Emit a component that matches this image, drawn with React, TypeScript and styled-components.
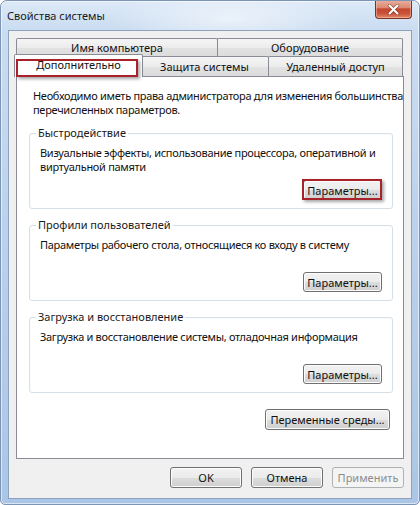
import React from "react";
import styled, { createGlobalStyle } from "styled-components";

const Global = createGlobalStyle`
  html, body { margin: 0; padding: 0; background: #ffffff; }
  body {
    font-family: "Noto Sans", "Open Sans", sans-serif;
    font-size: 11px;
    color: #000;
  }
  * { box-sizing: border-box; }
`;

const Window = styled.div`
  width: 420px;
  height: 505px;
  border: 1px solid #7d95b4;
  border-radius: 7px 7px 5px 5px;
  background:
    radial-gradient(ellipse 120px 30px at 230px 18px, rgba(255,255,255,0.55), rgba(255,255,255,0) 100%),
    linear-gradient(180deg, #dce9f7 0px, #cadcf1 30px, #bcd2ec 220px, #abc5e6 505px);
  display: flex;
  flex-direction: column;
  overflow: hidden;
  box-shadow: inset 0 0 0 1px rgba(255, 255, 255, 0.55);
`;

const TitleBar = styled.div`
  height: 29px;
  flex: none;
  display: flex;
  align-items: flex-start;
  justify-content: space-between;
`;

const Title = styled.div`
  padding-left: 6px;
  line-height: 29px;
  font-size: 11px;
  color: #1b1b1b;
`;

const CloseButton = styled.div`
  width: 37px;
  height: 19px;
  margin: -1px 7px 0 0;
  border: 1px solid #7a3323;
  border-top: none;
  border-radius: 0 0 4px 4px;
  background: linear-gradient(180deg, #eab1a2 0%, #dc8a74 42%, #c4472f 50%, #c9533a 75%, #e0896a 100%);
  box-shadow: inset 0 0 0 1px rgba(255, 210, 195, 0.45);
  display: flex;
  align-items: center;
  justify-content: center;
`;

const Client = styled.div`
  flex: 1;
  margin: 0 7px 5px;
  border: 1px solid #8da2bd;
  background: #f0f0f0;
  padding: 7px 7px 10px;
  display: flex;
  flex-direction: column;
`;

const TabStrip = styled.div`
  display: flex;
  flex-direction: column;
  position: relative;
  z-index: 2;
`;

const TabRow = styled.div<{ $h: number }>`
  display: flex;
  height: ${(p) => p.$h}px;
`;

const Tab = styled.div<{ $w: number; $selected?: boolean; $first?: boolean }>`
  position: relative;
  flex: none;
  width: ${(p) => p.$w}px;
  height: ${(p) => (p.$selected ? "23px" : "100%")};
  margin-top: ${(p) => (p.$selected ? "-2px" : "0")};
  margin-left: ${(p) => (p.$selected ? "-2px" : p.$first ? "0" : "-1px")};
  margin-right: ${(p) => (p.$selected ? "-2px" : "0")};
  z-index: ${(p) => (p.$selected ? 3 : 1)};
  border: 1px solid #898c95;
  border-bottom: none;
  border-radius: 2px 2px 0 0;
  background: ${(p) =>
    p.$selected
      ? "#ffffff"
      : "linear-gradient(180deg, #f5f5f5 0%, #ececec 50%, #e2e2e2 51%, #dcdcdc 100%)"};
  display: flex;
  align-items: center;
  justify-content: center;
  padding-bottom: ${(p) => (p.$selected ? "3px" : "0")};
  color: #111;
  white-space: nowrap;
`;

const Highlight = styled.span<{ $inset: string }>`
  position: absolute;
  inset: ${(p) => p.$inset};
  border: 2px solid #a82229;
  box-shadow: 2px 2px 3px rgba(0, 0, 0, 0.35);
  pointer-events: none;
`;

const Panel = styled.div`
  flex: 1;
  position: relative;
  z-index: 1;
  border: 1px solid #898c95;
  background: #ffffff;
  padding: 12px 10px 0 12px;
  display: flex;
  flex-direction: column;
`;

const Intro = styled.div`
  margin: 0 0 9px 4px;
  line-height: 14px;
  color: #111;
  white-space: nowrap;
  letter-spacing: -0.3px;
`;

const Group = styled.fieldset`
  margin: 0 0 9px;
  min-width: 0;
  border: 1px solid #d5dfe5;
  border-radius: 3px;
  padding: 0 10px 8px 10px;
  display: flex;
  flex-direction: column;
  box-shadow: inset 1px 1px 0 #fafcfd;
`;

const Legend = styled.legend`
  padding: 0 2px;
  margin-left: -4px;
  line-height: 14px;
  color: #1a1a1a;
`;

const Desc = styled.div`
  margin-top: 6px;
  line-height: 14px;
  min-height: 28px;
  color: #111;
  white-space: nowrap;
  letter-spacing: -0.3px;
`;

const ButtonRow = styled.div<{ $mt: number; $pr?: number }>`
  display: flex;
  justify-content: flex-end;
  margin-top: ${(p) => p.$mt}px;
  padding-right: ${(p) => p.$pr ?? 0}px;
  gap: 9px;
`;

const Button = styled.div<{ $w: number; $h?: number; $disabled?: boolean }>`
  position: relative;
  width: ${(p) => p.$w}px;
  height: ${(p) => p.$h ?? 20}px;
  border: 1px solid ${(p) => (p.$disabled ? "#adb2b5" : "#707070")};
  border-radius: 3px;
  background: ${(p) =>
    p.$disabled
      ? "#f4f4f4"
      : "linear-gradient(180deg, #f2f2f2 0%, #ebebeb 50%, #dddddd 51%, #cfcfcf 100%)"};
  box-shadow: inset 0 0 0 1px ${(p) => (p.$disabled ? "#f4f4f4" : "#fcfcfc")};
  display: flex;
  align-items: center;
  justify-content: center;
  color: ${(p) => (p.$disabled ? "#8d8d8d" : "#111")};
  white-space: nowrap;
`;

const BottomRow = styled.div`
  display: flex;
  justify-content: flex-end;
  gap: 9px;
  margin-top: 8px;
`;

const CloseIcon = () => (
  <svg width="13" height="11" viewBox="0 0 13 11">
    <path d="M2.5 1.5 L10.5 9.5 M10.5 1.5 L2.5 9.5" stroke="#6b2a1e" strokeWidth="3.6" strokeLinecap="round" opacity="0.55" />
    <path d="M2.5 1.5 L10.5 9.5 M10.5 1.5 L2.5 9.5" stroke="#ffffff" strokeWidth="2" strokeLinecap="round" />
  </svg>
);

export default function App() {
  return (
    <>
      <Global />
      <Window>
        <TitleBar>
          <Title>Свойства системы</Title>
          <CloseButton>
            <CloseIcon />
          </CloseButton>
        </TitleBar>
        <Client>
          <TabStrip>
            <TabRow $h={18}>
              <Tab $w={202} $first>Имя компьютера</Tab>
              <Tab $w={186}>Оборудование</Tab>
            </TabRow>
            <TabRow $h={20}>
              <Tab $w={129} $selected>
                Дополнительно
                <Highlight $inset="4px 4px 0 1px" />
              </Tab>
              <Tab $w={129}>Защита системы</Tab>
              <Tab $w={135}>Удаленный доступ</Tab>
            </TabRow>
          </TabStrip>
          <Panel>
            <Intro>
              Необходимо иметь права администратора для изменения большинства
              <br />
              перечисленных параметров.
            </Intro>
            <Group>
              <Legend>Быстродействие</Legend>
              <Desc>
                Визуальные эффекты, использование процессора, оперативной и
                <br />
                виртуальной памяти
              </Desc>
              <ButtonRow $mt={6}>
                <Button $w={79}>
                  Параметры...
                  <Highlight $inset="-2px -1px -1px -2px" />
                </Button>
              </ButtonRow>
            </Group>
            <Group>
              <Legend>Профили пользователей</Legend>
              <Desc>Параметры рабочего стола, относящиеся ко входу в систему</Desc>
              <ButtonRow $mt={6}>
                <Button $w={79}>Параметры...</Button>
              </ButtonRow>
            </Group>
            <Group>
              <Legend>Загрузка и восстановление</Legend>
              <Desc>Загрузка и восстановление системы, отладочная информация</Desc>
              <ButtonRow $mt={6}>
                <Button $w={79}>Параметры...</Button>
              </ButtonRow>
            </Group>
            <ButtonRow $mt={7} $pr={3}>
              <Button $w={125} $h={21}>Переменные среды...</Button>
            </ButtonRow>
          </Panel>
          <BottomRow>
            <Button $w={72} $h={21}>OK</Button>
            <Button $w={72} $h={21}>Отмена</Button>
            <Button $w={72} $h={21} $disabled>Применить</Button>
          </BottomRow>
        </Client>
      </Window>
    </>
  );
}
